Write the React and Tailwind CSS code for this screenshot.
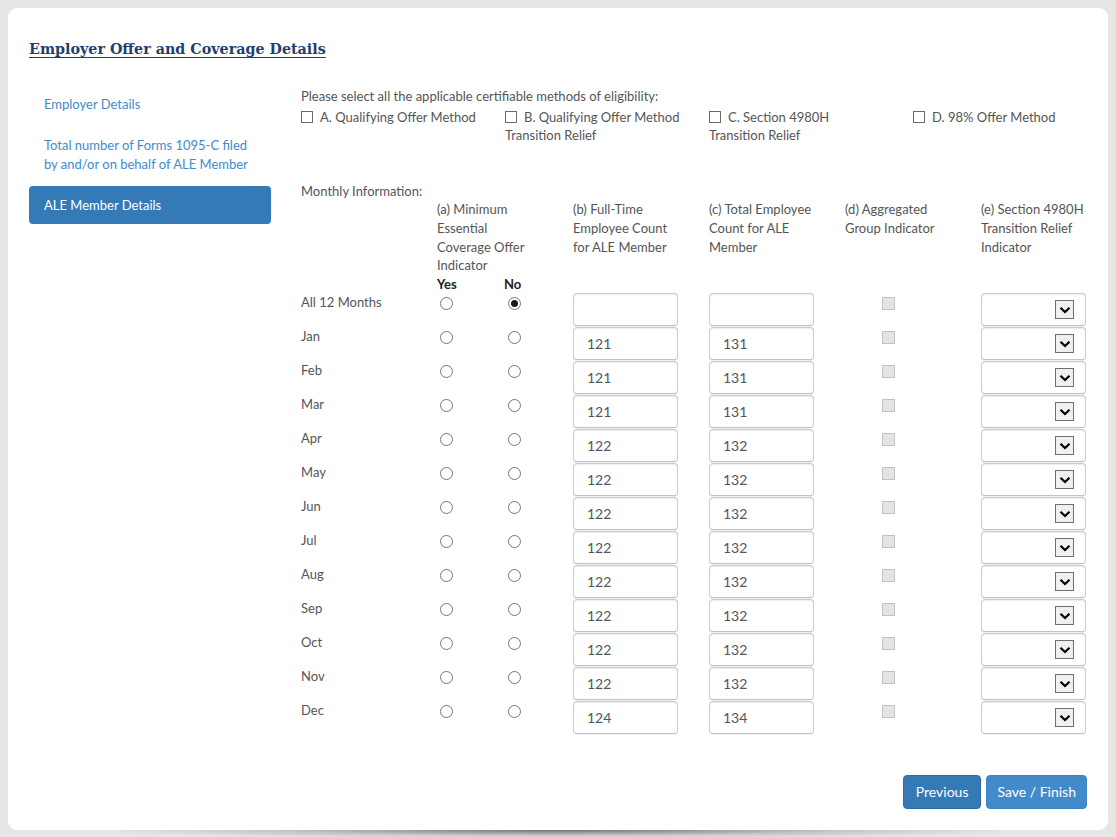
import React from 'react';

const months = [
  { m: 'Jan', b: '121', c: '131' },
  { m: 'Feb', b: '121', c: '131' },
  { m: 'Mar', b: '121', c: '131' },
  { m: 'Apr', b: '122', c: '132' },
  { m: 'May', b: '122', c: '132' },
  { m: 'Jun', b: '122', c: '132' },
  { m: 'Jul', b: '122', c: '132' },
  { m: 'Aug', b: '122', c: '132' },
  { m: 'Sep', b: '122', c: '132' },
  { m: 'Oct', b: '122', c: '132' },
  { m: 'Nov', b: '122', c: '132' },
  { m: 'Dec', b: '124', c: '134' },
];

const Radio = ({ checked, className }) => (
  <div className={`w-[13px] h-[13px] rounded-full border border-[#767676] bg-white flex items-center justify-center ${className}`}>
    {checked && <div className="w-[7px] h-[7px] rounded-full bg-[#1a1a1a]" />}
  </div>
);

const Box = () => (
  <div className="w-[12px] h-[12px] border border-[#6b6b6b] bg-white shrink-0 mt-[3px]" />
);

const TextBox = ({ value }) => (
  <div className="w-[105px] h-[33px] rounded-[4px] border border-[#cccccc] border-b-[#c2c2c2] bg-white shadow-[inset_0_1px_1px_rgba(0,0,0,0.075),0_1px_0_rgba(0,0,0,0.06)] px-[13px] flex items-center text-[14px] text-[#555]">
    {value}
  </div>
);

const SelectBox = () => (
  <div className="w-[105px] h-[33px] rounded-[4px] border border-[#cccccc] border-b-[#c2c2c2] bg-white shadow-[inset_0_1px_1px_rgba(0,0,0,0.075),0_1px_0_rgba(0,0,0,0.06)] flex items-center justify-end pr-[11px]">
    <div className="w-[19px] h-[19px] border border-[#707070] bg-[#f0f0f0] flex items-center justify-center">
      <svg width="12" height="8" viewBox="0 0 12 8">
        <path d="M1.5 1.8 L6 6 L10.5 1.8" fill="none" stroke="#000" strokeWidth="2.2" />
      </svg>
    </div>
  </div>
);

const Row = ({ label, b, c, noChecked }) => (
  <>
    <div className="h-[34px]">{label}</div>
    <div className="h-[34px]"><Radio className="ml-[3px] mt-[4px]" /></div>
    <div className="h-[34px]"><Radio checked={noChecked} className="ml-[4px] mt-[4px]" /></div>
    <div className="h-[34px]"><TextBox value={b} /></div>
    <div className="h-[34px]"><TextBox value={c} /></div>
    <div className="h-[34px]">
      <div className="ml-[37px] mt-[4px] w-[13px] h-[13px] border border-[#c2c2c2] bg-[#e4e4e4]" />
    </div>
    <div className="h-[34px]"><SelectBox /></div>
  </>
);

export default function App() {
  return (
    <div className="min-h-screen bg-[#e6e6e6] p-[8px] font-['Lato','Open_Sans',sans-serif] text-[13px] leading-[18.6px] text-[#555]">
      <div className="relative w-[1100px]">
        <div className="relative z-10 bg-white rounded-[9px] px-[21px] pt-[31px] pb-[21px]">
          <h1 className="font-['DejaVu_Serif',serif] font-bold text-[14.3px] leading-[20px] text-[#1f3f6e] underline underline-offset-[3px]">
            Employer Offer and Coverage Details
          </h1>

          <div className="flex mt-[26px]">
            {/* Sidebar */}
            <div className="w-[242px] shrink-0 flex flex-col gap-[2px] text-[#428bca]">
              <div className="px-[15px] py-[10px] leading-[19px]">Employer Details</div>
              <div className="px-[15px] py-[10px] leading-[19px]">
                Total number of Forms 1095-C filed<br />by and/or on behalf of ALE Member
              </div>
              <div className="px-[15px] h-[38px] flex items-center rounded-[4px] bg-[#337ab7] text-white">
                ALE Member Details
              </div>
            </div>

            {/* Main */}
            <div className="ml-[30px] pt-[2px]">
              <div>Please select all the applicable certifiable methods of eligibility:</div>
              <div className="mt-[2px] grid grid-cols-[204px_204px_204px_174px]">
                <div className="flex gap-[7px]"><Box /><span>A. Qualifying Offer Method</span></div>
                <div>
                  <div className="flex gap-[7px]"><Box /><span>B. Qualifying Offer Method</span></div>
                  <div>Transition Relief</div>
                </div>
                <div>
                  <div className="flex gap-[7px]"><Box /><span>C. Section 4980H</span></div>
                  <div>Transition Relief</div>
                </div>
                <div className="flex gap-[7px]"><Box /><span>D. 98% Offer Method</span></div>
              </div>

              <div className="mt-[37px]">Monthly Information:</div>

              <div className="grid grid-cols-[136px_67px_69px_136px_136px_136px_105px]">
                {/* Header */}
                <div />
                <div className="col-span-2">
                  <div>(a) Minimum</div>
                  <div>Essential</div>
                  <div>Coverage Offer</div>
                  <div>Indicator</div>
                  <div className="flex font-bold text-[#222]">
                    <span className="w-[67px]">Yes</span>
                    <span>No</span>
                  </div>
                </div>
                <div>
                  <div>(b) Full-Time</div>
                  <div>Employee Count</div>
                  <div>for ALE Member</div>
                </div>
                <div>
                  <div>(c) Total Employee</div>
                  <div>Count for ALE</div>
                  <div>Member</div>
                </div>
                <div>
                  <div>(d) Aggregated</div>
                  <div>Group Indicator</div>
                </div>
                <div>
                  <div>(e) Section 4980H</div>
                  <div>Transition Relief</div>
                  <div>Indicator</div>
                </div>

                <Row label="All 12 Months" b="" c="" noChecked />
                {months.map(r => (
                  <Row key={r.m} label={r.m} b={r.b} c={r.c} />
                ))}
              </div>

              <div className="mt-[40px] flex justify-end gap-[5px]">
                <button className="h-[34px] px-[12px] rounded-[4px] bg-[#337ab7] border border-[#2e6da4] text-white text-[14px]">
                  Previous
                </button>
                <button className="h-[34px] px-[10px] rounded-[4px] bg-[#428bca] border border-[#3d84c1] text-white text-[14px]">
                  Save / Finish
                </button>
              </div>
            </div>
          </div>
        </div>
        {/* curved drop shadow under the card */}
        <div className="absolute left-[10%] right-[10%] top-full h-[8px] bg-[radial-gradient(ellipse_at_top,rgba(0,0,0,0.5),rgba(0,0,0,0.15)_45%,transparent_75%)]" />
      </div>
    </div>
  );
}
